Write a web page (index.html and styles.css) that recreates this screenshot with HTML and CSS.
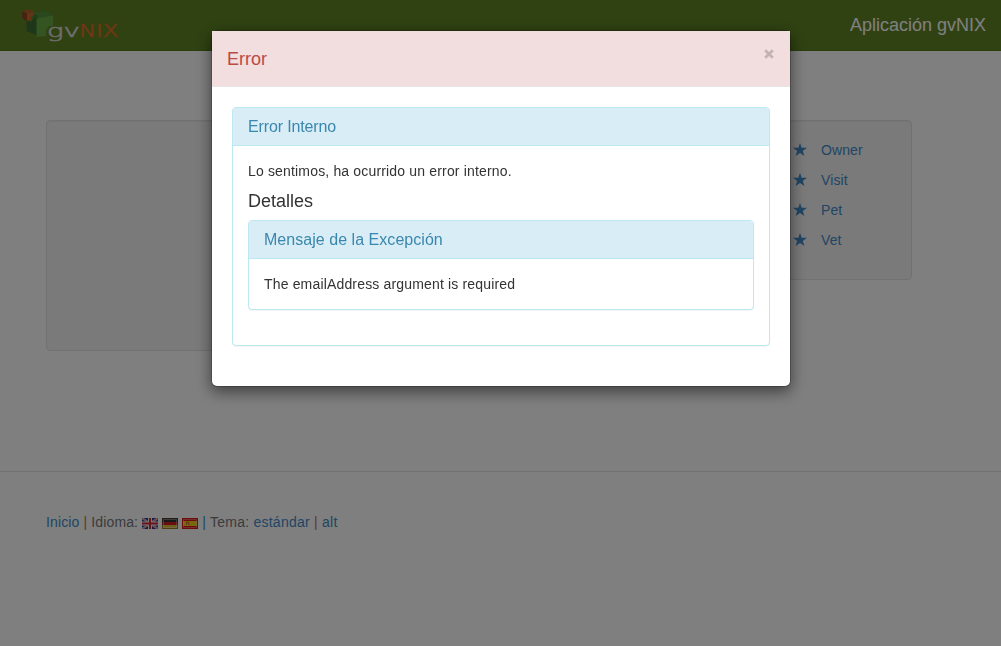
FILE: index.html
```html
<!DOCTYPE html>
<html lang="es">
<head>
<meta charset="utf-8">
<title>Aplicación gvNIX</title>
<link rel="stylesheet" href="styles.css">
</head>
<body>
<header class="navbar">
  <a class="logo" href="#"><svg width="110" height="44" viewBox="14 4 110 44">
    <path fill="#3c6c34" d="M26.500 20.500l5 1.500 3-6 5.500 2v18.500L26.500 31z"/>
    <path fill="#55913a" d="M31 17l4-5 4 1 4-2 5.500 1 4.500 3.500L39 18.500z"/>
    <path fill="#447b38" d="M33 14l5 1v3l-5-1z"/>
    <path fill="#69a843" d="M36.500 18.500L53 15.500V26h-4l-3 4v6l-9.500 1z"/>
    <path fill="#b8622c" d="M22 11l6-1.500 5.500 1.500-5.500 2.500z"/><path fill="#8b4b25" d="M22 11l5 2.500v8L22 18z"/><path fill="#c86a2a" d="M27 14l6.500-2.500V16l-2.500.5v3.500l-4 1z"/>
    <g class="wordmark"><text class="light" x="47" y="36.500" textLength="33" lengthAdjust="spacingAndGlyphs">gv</text><text class="orange" x="79" y="37" textLength="39.500" lengthAdjust="spacingAndGlyphs">NIX</text></g>
  </svg></a>
  <span class="brand">Aplicación gvNIX</span>
</header>
<main class="page">
  <section class="well content"></section>
  <nav class="well menu">
    <a href="#"><svg class="star" viewBox="0 0 14 13"><path d="M7 0l1.7 4.8H14L9.8 7.9 11.4 13 7 9.9 2.6 13l1.6-5.1L0 4.8h5.3z"/></svg>Owner</a>
    <a href="#"><svg class="star" viewBox="0 0 14 13"><path d="M7 0l1.7 4.8H14L9.8 7.9 11.4 13 7 9.9 2.6 13l1.6-5.1L0 4.8h5.3z"/></svg>Visit</a>
    <a href="#"><svg class="star" viewBox="0 0 14 13"><path d="M7 0l1.7 4.8H14L9.8 7.9 11.4 13 7 9.9 2.6 13l1.6-5.1L0 4.8h5.3z"/></svg>Pet</a>
    <a href="#"><svg class="star" viewBox="0 0 14 13"><path d="M7 0l1.7 4.8H14L9.8 7.9 11.4 13 7 9.9 2.6 13l1.6-5.1L0 4.8h5.3z"/></svg>Vet</a>
  </nav>
</main>
<footer class="footer">
  <a href="#">Inicio</a> <span class="bar">|</span> Idioma:
  <svg class="flag" viewBox="0 0 16 11"><path fill="#263b91" d="M0 0h16v11H0z"/><path stroke="#ddd" stroke-width="2" d="M0 0l16 11M16 0L0 11"/><path stroke="#d33" stroke-width=".6" d="M0 0l16 11M16 0L0 11"/><path stroke="#eee" stroke-width="4" d="M8 0v11M0 5.500h16"/><path stroke="#d5263a" stroke-width="2" d="M8 0v11M0 5.500h16"/></svg>
  <svg class="flag" viewBox="0 0 16 11"><path fill="#333" d="M0 0h16v4H0z"/><path fill="#d01c1c" d="M0 4h16v3H0z"/><path fill="#e5bd38" d="M0 7h16v4H0z"/><path fill="none" stroke="#fff" stroke-opacity=".35" d="M1.500 1.500h13v8h-13z"/><path fill="none" stroke="#554018" stroke-opacity=".5" d="M.5.5h15v10H.5z"/></svg>
  <svg class="flag" viewBox="0 0 16 11"><path fill="#dd1616" d="M0 0h16v11H0z"/><path fill="#f4cf18" d="M1 3h14v5H1z"/><path fill="none" stroke="#fff" stroke-opacity=".3" d="M1.500 1.500h13v8h-13z"/><path fill="#c97833" d="M4 4l2-1 1.500 2v2H4z"/><path fill="#ddc7a0" d="M5 5h1v2H5z"/></svg>
  <span class="theme"><span class="bar blue">|</span> Tema: <a href="#">estándar</a> <span class="bar">|</span> <a href="#">alt</a></span>
</footer>
<div class="backdrop">
  <div class="modal" role="dialog">
    <div class="modal-header">
      <h4>Error</h4>
      <button class="close" aria-label="Cerrar"><svg width="10" height="10" viewBox="0 0 10 10"><path d="M1.200 1.200l7.600 7.600M8.800 1.200L1.200 8.800"/></svg></button>
    </div>
    <div class="modal-body">
      <section class="panel">
        <h3 class="panel-heading tight">Error Interno</h3>
        <div class="panel-body">
          <p>Lo sentimos, ha ocurrido un error interno.</p>
          <h4 class="details">Detalles</h4>
          <section class="panel inner">
            <h3 class="panel-heading">Mensaje de la Excepción</h3>
            <div class="panel-body"><p>The emailAddress argument is required</p></div>
          </section>
        </div>
      </section>
    </div>
  </div>
</div>
</body>
</html>
```
FILE: styles.css
```css
* { box-sizing: border-box; }
body { margin: 0; height: 646px; overflow: hidden; background: #fff; color: #333; font: 14px/20px "Liberation Sans", Arial, sans-serif; }
h3, h4, p { margin: 0; font-weight: normal; }
p { letter-spacing: .165px; }
a { color: #428bca; text-decoration: none; }
.navbar { height: 51px; padding: 4px 15px 0 14px; display: flex; justify-content: space-between; background: #608424; border-bottom: 1px solid #557a18; }
.logo svg { display: block; }
.wordmark { font: 200 17px "DejaVu Sans", sans-serif; stroke-width: .6; }
.light { fill: #d8d8d8; stroke: #d8d8d8; }
.orange { fill: #e06c24; stroke: #e06c24; }
.brand { color: #fff; font-size: 18px; line-height: 20px; padding-top: 11px; }
.page { display: flex; align-items: flex-start; justify-content: space-between; width: 866px; height: 351px; margin: 69px 0 0 46px; }
.well { background: #f5f5f5; border: 1px solid #e3e3e3; border-radius: 4px; box-shadow: inset 0 1px 1px rgba(0,0,0,.05); }
.content { width: 640px; height: 231px; }
.menu { width: 140px; height: 160px; padding: 14px 19px; letter-spacing: .1px; }
.menu a { display: flex; align-items: center; height: 30px; }
.star { width: 14px; height: 13px; margin: 0 14.500px 2px .5px; fill: #428bca; }
.footer { height: 175px; padding: 40px 46px; border-top: 1px solid #e3e3e3; color: #777; letter-spacing: .13px; }
.theme { letter-spacing: .24px; }
.flag { width: 16px; height: 11px; vertical-align: -2px; }
.bar { color: #c66c48; }
.blue { color: #428bca; }
.backdrop { position: fixed; inset: 0; padding: 30px 210px 0 211px; background: rgba(0,0,0,.5); }
.modal { width: 580px; height: 357px; background: #fff; background-clip: padding-box; border: 1px solid rgba(0,0,0,.2); border-radius: 6px; box-shadow: 0 5px 15px rgba(0,0,0,.5); }
.modal-header { height: 56px; padding: 15px; display: flex; justify-content: space-between; background: #f2dede; border-bottom: 1px solid #e5e5e5; color: #b94a48; }
.modal-header h4 { font-size: 18px; line-height: 27px; }
.close { display: block; width: 10px; height: 10px; margin: 3px 1px 0 0; padding: 0; border: 0; background: none; }
.close svg { display: block; fill: none; stroke: #c2b2b2; stroke-width: 2.700; }
.modal-body { padding: 20px; }
.panel { height: 239px; border: 1px solid #bce8f1; border-radius: 4px; background: #fff; box-shadow: 0 1px 1px rgba(0,0,0,.05); }
.panel-heading { height: 38px; padding: 10px 15px; border-bottom: 1px solid #bce8f1; border-radius: 3px 3px 0 0; background: #d9edf7; color: #3a87ad; font-size: 16px; line-height: 18px; letter-spacing: .04px; }
.tight { letter-spacing: -.14px; }
.panel-body { padding: 15px; }
.details { margin: 11px 0 9px; font-size: 18px; line-height: 19px; }
.panel.inner { height: 90px; }
```
